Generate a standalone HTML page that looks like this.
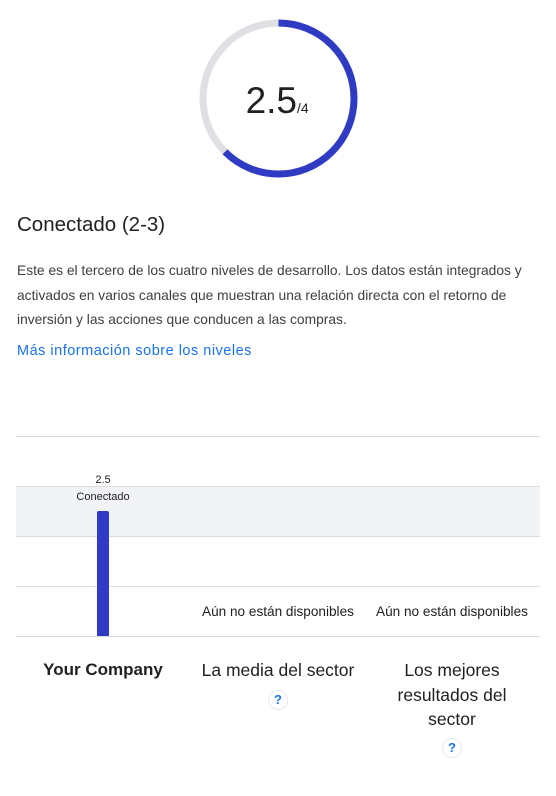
<!DOCTYPE html>
<html><head><meta charset="utf-8"><style>
body{margin:0;width:556px;height:796px;background:#fff;font-family:"Liberation Sans",Arial,sans-serif;color:#202124;position:relative;overflow:hidden}
.a{position:absolute;white-space:nowrap}
.g{position:absolute;left:16px;width:524px;height:1px;background:#dadce0}
.c{position:absolute;text-align:center}
.q{display:inline-block;width:18px;height:18px;border-radius:50%;border:1px solid #e8eaed;color:#1a73e8;font-size:13px;line-height:18px;text-align:center;font-weight:bold}
</style></head><body>
<svg class="a" style="left:0;top:0" width="556" height="200">
<circle cx="278.5" cy="98.5" r="75.5" fill="none" stroke="#dfe0e4" stroke-width="7"/>
<circle cx="278.5" cy="98.5" r="75.5" fill="none" stroke="#2f3bc2" stroke-width="7" stroke-dasharray="296.5 500" transform="rotate(-90 278.5 98.5)"/>
<text x="297" y="113" text-anchor="end" font-family="Liberation Sans" font-size="37" fill="#202124">2.5</text>
<text x="297" y="113" font-family="Liberation Sans" font-size="14" fill="#202124">/4</text>
</svg>
<div class="a" style="left:17px;top:213px;font-size:20.5px">Conectado (2-3)</div>
<div class="a" style="left:17px;top:259px;font-size:13.8px;line-height:24.5px;color:#3c4043">Este es el tercero de los cuatro niveles de desarrollo. Los datos están integrados y<br>activados en varios canales que muestran una relación directa con el retorno de<br>inversión y las acciones que conducen a las compras.</div>
<div class="a" style="left:17px;top:343px;font-size:14.5px;color:#1a73e8;letter-spacing:0.5px">Más información sobre los niveles</div>
<div style="position:absolute;left:16px;top:486px;width:524px;height:50px;background:#f1f3f4"></div>
<div class="g" style="top:436px"></div>
<div class="g" style="top:486px"></div>
<div class="g" style="top:536px"></div>
<div class="g" style="top:586px"></div>
<div class="g" style="top:636px"></div>
<div style="position:absolute;left:97px;top:511px;width:12px;height:125px;background:#2f3bc2;border-radius:2px 2px 0 0"></div>
<div class="c" style="left:53px;width:100px;top:472px;font-size:11px;line-height:17px">2.5<br>Conectado</div>
<div class="c" style="left:178px;width:200px;top:604px;font-size:13.6px">Aún no están disponibles</div>
<div class="c" style="left:352px;width:200px;top:604px;font-size:13.6px">Aún no están disponibles</div>
<div class="c" style="left:23px;width:160px;top:660px;font-size:17px;font-weight:bold">Your Company</div>
<div class="c" style="left:178px;width:200px;top:658px;font-size:17.5px;line-height:24.5px">La media del sector<br><span class="q" style="margin-top:7px">?</span></div>
<div class="c" style="left:362px;width:180px;top:658px;font-size:17.5px;line-height:24.5px">Los mejores<br>resultados del<br>sector<br><span class="q" style="margin-top:6px">?</span></div>
</body></html>
